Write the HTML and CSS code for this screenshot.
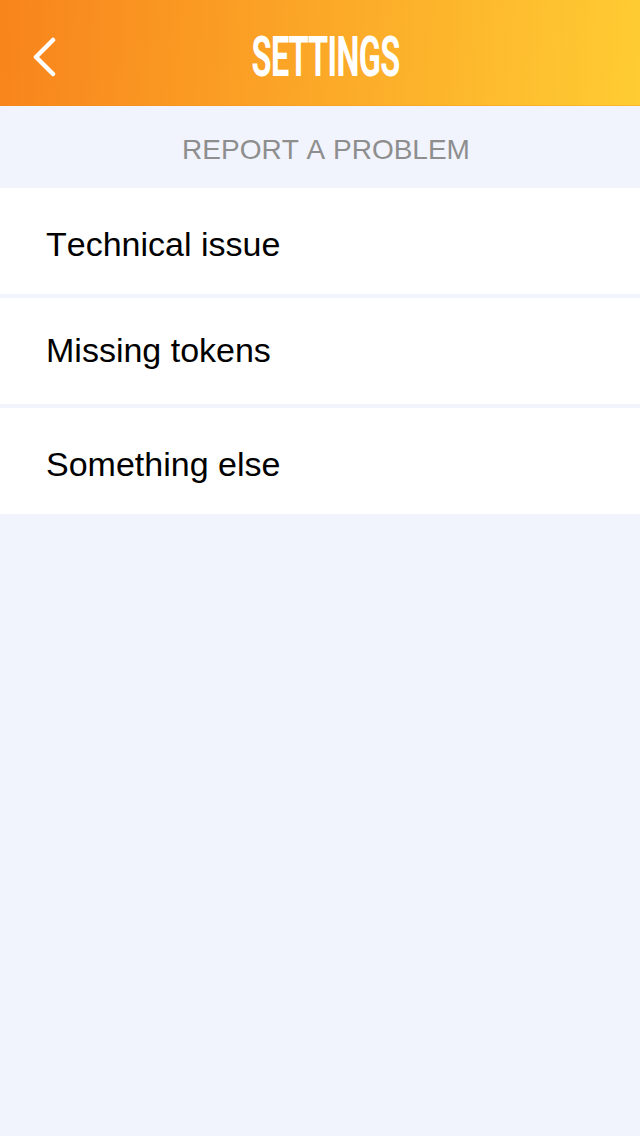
FILE: index.html
```html
<!DOCTYPE html>
<html lang="en">
<head>
  <meta charset="UTF-8">
  <meta name="viewport" content="width=device-width, initial-scale=1.0">
  <title>Settings</title>
  <link rel="stylesheet" href="styles.css">
</head>
<body>
  <div class="navbar">
    <a class="back" href="#" aria-label="Back">
      <svg width="26" height="40" viewBox="0 0 26 40">
        <path d="M22 3 L5 20 L22 37" fill="none" stroke="#fff" stroke-width="4.5" stroke-linecap="round" stroke-linejoin="round"/>
      </svg>
    </a>
    <h1><span>SETTINGS</span></h1>
  </div>

  <h2 class="section-title">REPORT A PROBLEM</h2>

  <div class="menu">
    <a class="menu-item" href="#">Technical issue</a>
    <a class="menu-item menu-item-high" href="#">Missing tokens</a>
    <a class="menu-item" href="#">Something else</a>
  </div>
</body>
</html>
```

FILE: styles.css
```css
body {
  font-family: "Liberation Sans", Arial, sans-serif;
  font-kerning: none;
  background-color: #f1f4fd;
  margin: 0;
  padding: 0;
  min-height: 1136px;
}

.navbar {
  display: flex;
  align-items: center;
  justify-content: center;
  position: relative;
  height: 106px;
  padding-left: 12px;
  box-sizing: border-box;
  border-bottom: 1px solid rgba(240, 150, 20, 0.3);
  background: linear-gradient(95deg, #f8841c 0%, #ffcc33 100%);
}

.back {
  position: absolute;
  left: 31px;
  top: 37px;
  display: block;
  height: 40px;
}

h1 {
  margin: 8px 0 0;
  font-family: "Roboto", "Liberation Sans", sans-serif;
  font-size: 55px;
  font-weight: 700;
  letter-spacing: -1px;
  line-height: 106px;
  color: #fff;
}

/* no condensed font installed, so squeeze it */
h1 span {
  display: block;
  transform: scaleX(0.59);
}

.section-title {
  margin: 0;
  height: 82px;
  padding-left: 12px;
  font-size: 28px;
  font-weight: 400;
  line-height: 88px;
  text-align: center;
  color: #8e8e8e;
}

.menu {
  display: flex;
  flex-direction: column;
  gap: 4px;
}

.menu-item {
  display: block;
  height: 106px;
  padding-left: 46px;
  background-color: #fff;
  color: #000;
  font-size: 34px;
  line-height: 112px;
  text-decoration: none;
}

.menu-item-high {
  line-height: 104px;
}
```
